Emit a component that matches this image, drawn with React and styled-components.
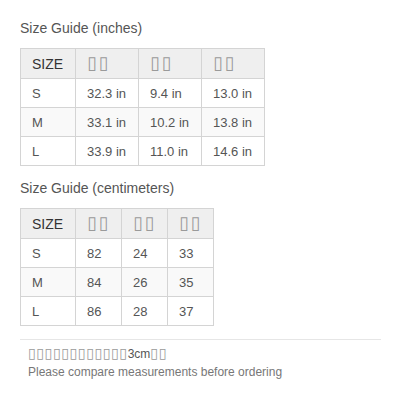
import React from 'react';
import styled, { createGlobalStyle } from 'styled-components';

const GlobalStyle = createGlobalStyle`
  body {
    margin: 0;
    background: #fff;
    font-family: "Liberation Sans", Arial, sans-serif;
  }
`;

const Page = styled.div`
  width: 400px;
  padding: 20px 19px 0 20px;
  box-sizing: border-box;
`;

const Title = styled.h3`
  margin: 0 0 12px;
  font-size: 14px;
  line-height: 16px;
  font-weight: normal;
  color: #555;
`;

const Table = styled.table`
  border-collapse: collapse;
  table-layout: fixed;
  margin-bottom: ${({ last }) => (last ? '13px' : '14px')};
  font-size: 13px;
  color: #555;
`;

const Row = styled.tr`
  background: ${({ striped }) => (striped ? '#f9f9f9' : '#fff')};
`;

const HeadCell = styled.th`
  height: 30px;
  padding: 0 11px;
  border: 1px solid #d4d4d4;
  background: #efefef;
  text-align: left;
  font-size: 14px;
  font-weight: normal;
  color: #333;
  box-sizing: border-box;
`;

const Cell = styled.td`
  height: 29px;
  padding: 0 11px;
  border: 1px solid #d4d4d4;
  text-align: left;
  box-sizing: border-box;
`;

const Tofu = styled.span`
  font-family: "DejaVu Sans", sans-serif;
  font-size: ${({ small }) => (small ? '14px' : '18px')};
  line-height: 0;
  letter-spacing: ${({ small }) => (small ? '0.6px' : '1.6px')};
  color: #9a9a9a;
`;

const Footer = styled.div`
  border-top: 1px solid #e6e6e6;
  padding: 5px 8px 0;
  font-size: 12px;
  line-height: 18px;
  color: #666;
`;

const Line = styled.div`
  height: 18px;
  color: ${({ muted }) => (muted ? '#777' : '#555')};
`;

const blank = (n) => '\u25AF'.repeat(n);

const inches = {
  title: 'Size Guide (inches)',
  widths: [55, 63, 63, 63],
  rows: [
    ['S', '32.3 in', '9.4 in', '13.0 in'],
    ['M', '33.1 in', '10.2 in', '13.8 in'],
    ['L', '33.9 in', '11.0 in', '14.6 in'],
  ],
};

const centimeters = {
  title: 'Size Guide (centimeters)',
  widths: [55, 46, 46, 46],
  rows: [
    ['S', '82', '24', '33'],
    ['M', '84', '26', '35'],
    ['L', '86', '28', '37'],
  ],
};

const SizeTable = ({ data, last }) => (
  <>
    <Title>{data.title}</Title>
    <Table last={last} style={{ width: data.widths.reduce((a, b) => a + b, 0) }}>
      <colgroup>
        {data.widths.map((w, i) => <col key={i} style={{ width: w }} />)}
      </colgroup>
      <thead>
        <tr>
          <HeadCell>SIZE</HeadCell>
          <HeadCell><Tofu>{blank(2)}</Tofu></HeadCell>
          <HeadCell><Tofu>{blank(2)}</Tofu></HeadCell>
          <HeadCell><Tofu>{blank(2)}</Tofu></HeadCell>
        </tr>
      </thead>
      <tbody>
        {data.rows.map((row, i) => (
          <Row key={row[0]} striped={i === 1}>
            {row.map((v, j) => <Cell key={j}>{v}</Cell>)}
          </Row>
        ))}
      </tbody>
    </Table>
  </>
);

export default function App() {
  return (
    <Page>
      <GlobalStyle />
      <SizeTable data={inches} />
      <SizeTable data={centimeters} last />
      <Footer>
        <Line>
          <Tofu small>{blank(12)}</Tofu>3cm<Tofu small>{blank(2)}</Tofu>
        </Line>
        <Line muted>Please compare measurements before ordering</Line>
      </Footer>
    </Page>
  );
}
